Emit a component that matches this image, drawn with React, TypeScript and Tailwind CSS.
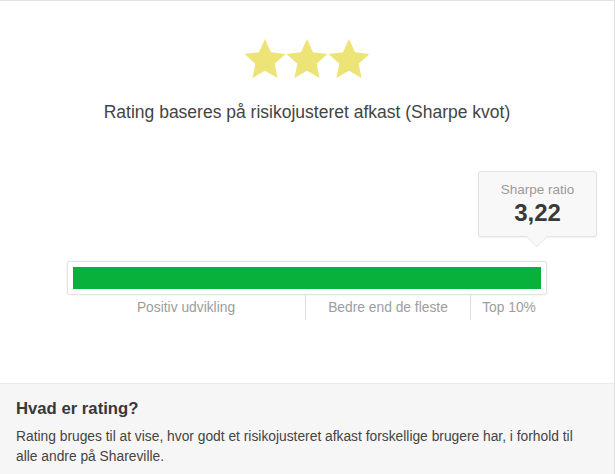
import React from "react";

const Star = () => (
  <svg width="44" height="42" viewBox="0 0 24 23" className="block">
    <path
      d="M12 0.6l3.3 7.2 7.9 0.9-5.9 5.4 1.6 7.8L12 17.9l-6.9 4 1.6-7.8L0.8 8.7l7.9-0.9z"
      fill="#ede477"
    />
  </svg>
);

export default function App() {
  return (
    <div
      className="w-[615px] h-[474px] bg-white border-t border-r border-[#e2e2e2] flex flex-col overflow-hidden text-[#444]"
      style={{ fontFamily: "'Liberation Sans', Arial, sans-serif" }}
    >
      <div className="flex-1 flex flex-col items-center">
        <div className="flex mt-[37px] -space-x-[2px]">
          <Star />
          <Star />
          <Star />
        </div>
        <div className="mt-[21px] text-[17.5px] leading-[22px] text-[#444]">
          Rating baseres på risikojusteret afkast (Sharpe kvot)
        </div>
        <div className="w-[480px] mt-[48px] flex flex-col">
          <div className="flex justify-end">
            <div className="relative mr-[-50px] w-[119px] h-[66px] bg-[#f9f8f9] border border-[#e4e2e4] rounded-[3px] shadow-[0_1px_2px_rgba(0,0,0,0.06)] flex flex-col items-center pt-[10px]">
              <div className="text-[13.5px] leading-[16px] text-[#9a9a9a]">Sharpe ratio</div>
              <div className="text-[24px] leading-[27px] font-bold text-[#3a3a3a] mt-[1px]">3,22</div>
              <div className="absolute left-[50px] bottom-[-8px] w-[16px] h-[16px] bg-[#f9f8f9] rotate-45 border-r border-b border-[#ece9ec]" />
            </div>
          </div>
          <div className="mt-[24px] h-[34px] bg-white border border-[#e3e3e3] rounded-[3px] shadow-[0_0_3px_rgba(0,0,0,0.08)] p-[5px]">
            <div className="h-full bg-[#08b03c]" />
          </div>
          <div className="flex text-[13.8px] leading-[16px] text-[#9d9d9d]">
            <div className="w-[239px] h-[25px] flex items-center justify-center border-r border-[#dcdcdc]">
              Positiv udvikling
            </div>
            <div className="w-[165px] h-[25px] flex items-center justify-center border-r border-[#dcdcdc]">
              Bedre end de fleste
            </div>
            <div className="flex-1 h-[25px] flex items-center justify-center">Top 10%</div>
          </div>
        </div>
      </div>
      <div className="h-[91px] bg-[#f6f6f6] border-t border-[#ebebeb] px-[16px] pt-[15px]">
        <div className="text-[16.7px] leading-[20px] font-bold text-[#383838]">Hvad er rating?</div>
        <div className="mt-[8px] text-[13.8px] leading-[20px] text-[#444]">
          Rating bruges til at vise, hvor godt et risikojusteret afkast forskellige brugere har, i forhold til
          <br />
          alle andre på Shareville.
        </div>
      </div>
    </div>
  );
}
